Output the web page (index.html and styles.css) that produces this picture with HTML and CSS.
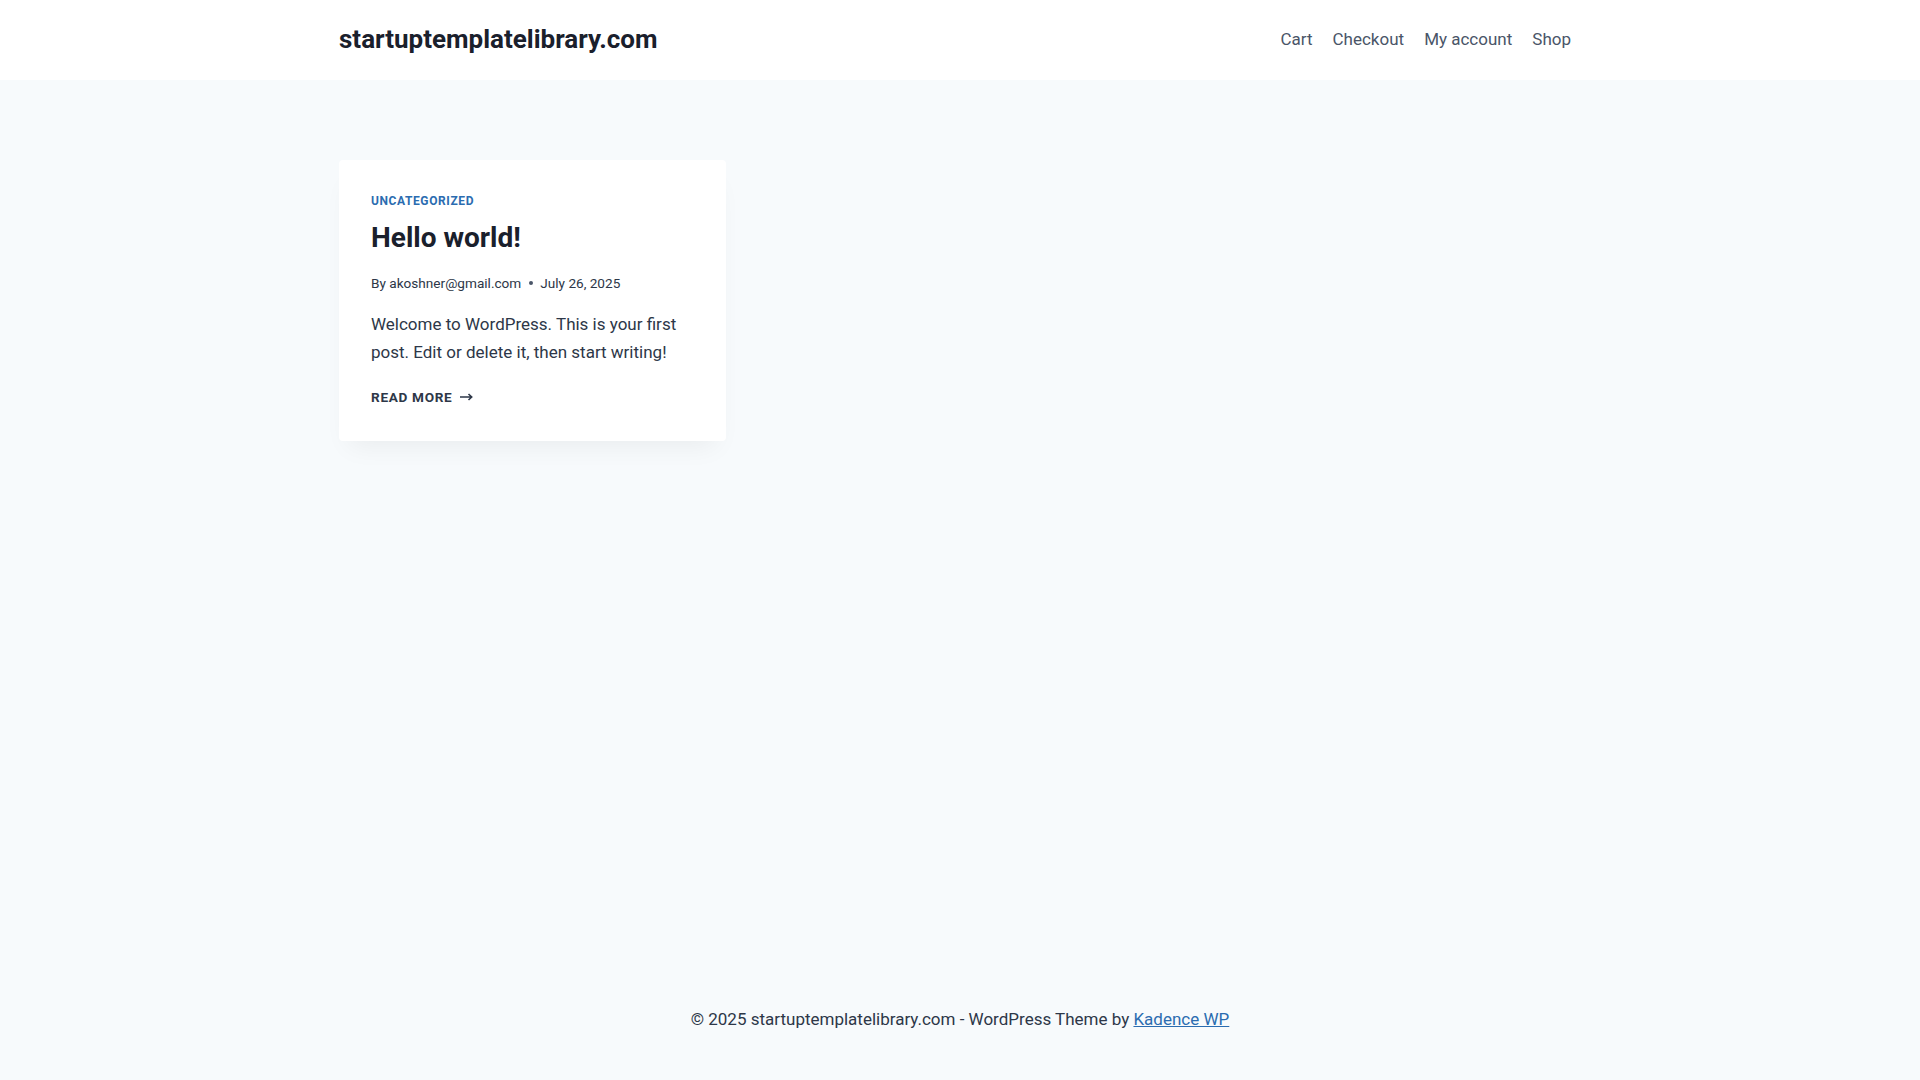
FILE: index.html
```html
<!DOCTYPE html>
<html lang="en">
<head>
  <meta charset="UTF-8" />
  <meta name="viewport" content="width=device-width, initial-scale=1.0" />
  <title>startuptemplatelibrary.com</title>
  <link rel="stylesheet" href="styles.css">
</head>
<body>
  <div class="wrapper">
    <header class="site-header">
      <div class="container header-row">
        <a class="site-title" href="#">startuptemplatelibrary.com</a>
        <nav class="main-nav">
          <a href="#">Cart</a>
          <a href="#">Checkout</a>
          <a href="#">My account</a>
          <a href="#">Shop</a>
        </nav>
      </div>
    </header>

    <main class="content">
      <div class="container posts-grid">
        <article class="post-card">
          <div class="entry-cats"><a href="#">Uncategorized</a></div>
          <h2 class="entry-title"><a href="#">Hello world!</a></h2>
          <div class="entry-meta">
            <span>By <a href="#">akoshner@gmail.com</a></span>
            <span class="dot"></span>
            <span>July 26, 2025</span>
          </div>
          <p class="entry-summary">Welcome to WordPress. This is your first post. Edit or delete it, then start writing!</p>
          <a class="read-more" href="#">Read More
            <svg width="13" height="8" viewBox="0 0 13 8" fill="none">
              <path d="M0 4h11.5M8.5 1l3.2 3-3.2 3" stroke="currentColor" stroke-width="1.6"/>
            </svg>
          </a>
        </article>
      </div>
    </main>

    <footer class="site-footer">
      <div class="container footer-text">
        &copy; 2025 startuptemplatelibrary.com - WordPress Theme by <a href="#">Kadence WP</a>
      </div>
    </footer>
  </div>
</body>
</html>
```

FILE: styles.css
```css
body {
  margin: 0;
  font-family: Roboto, "Liberation Sans", sans-serif;
  font-size: 17px;
  line-height: 1.6;
  color: #2d3748;
  background-color: #f7fafc;
}

a {
  color: inherit;
  text-decoration: none;
}

.wrapper {
  min-height: 100vh;
  display: flex;
  flex-direction: column;
}

.container {
  max-width: 1242px;
  margin: 0 auto;
  padding: 0 24px;
}

.site-header {
  background-color: #fff;
}

.header-row {
  height: 80px;
  display: flex;
  align-items: center;
  justify-content: space-between;
}

.site-title {
  font-size: 26px;
  font-weight: 700;
  color: #1a202c;
}

.main-nav {
  display: flex;
}

.main-nav a {
  color: #4a5568;
  font-size: 17px;
  padding: 10px 10px;
}

.content {
  flex: 1;
  padding: 80px 0;
}

.posts-grid {
  display: grid;
  grid-template-columns: repeat(3, 1fr);
  gap: 40px;
}

.post-card {
  background-color: #fff;
  border-radius: 4px;
  padding: 33px 32px 31px;
  box-shadow: 0 15px 25px -10px rgba(0, 0, 0, 0.06);
}

.entry-cats {
  font-size: 12px;
  line-height: 16px;
  font-weight: 700;
  letter-spacing: 0.05em;
  text-transform: uppercase;
  color: #2b6cb0;
}

.entry-title {
  margin: 8px 0 0;
  font-size: 28px;
  line-height: 42px;
  font-weight: 700;
  color: #1a202c;
}

.entry-meta {
  margin-top: 13px;
  font-size: 13.6px;
  line-height: 22px;
  display: flex;
  align-items: center;
  color: #2d3748;
}

.entry-meta .dot {
  width: 4px;
  height: 4px;
  border-radius: 50%;
  background-color: #4a5568;
  margin: 0 7px 0 8px;
}

.entry-summary {
  margin: 16px 0 0;
  line-height: 28px;
  color: #2d3748;
}

.read-more {
  display: inline-flex;
  align-items: center;
  margin-top: 19px;
  font-size: 13.6px;
  line-height: 24px;
  font-weight: 700;
  letter-spacing: 0.05em;
  text-transform: uppercase;
  color: #2d3748;
}

.read-more svg {
  margin-left: 8px;
}

.site-footer {
  padding: 44px 0 47px;
}

.footer-text {
  text-align: center;
  line-height: 27px;
}

.footer-text a {
  color: #2b6cb0;
  text-decoration: underline;
}
```
